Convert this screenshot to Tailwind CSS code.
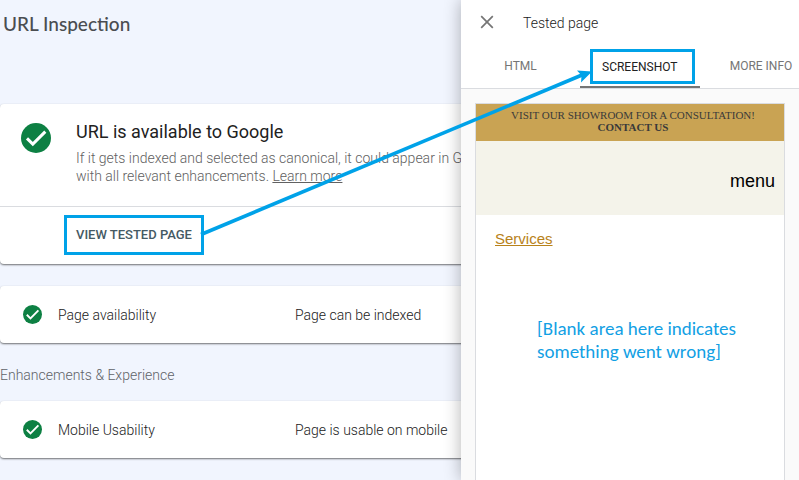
<!DOCTYPE html>
<html lang="en">
<head>
<meta charset="utf-8">
<meta name="viewport" content="width=device-width, initial-scale=1">
<title>URL Inspection</title>
<script src="https://cdn.jsdelivr.net/npm/@tailwindcss/browser@4"></script>
</head>
<body class="relative h-screen overflow-hidden bg-[#f1f5fe] font-['Roboto',sans-serif] text-sm text-[#212121]">

<svg class="hidden" aria-hidden="true">
  <symbol id="check" viewBox="0 0 30 30">
    <circle cx="15" cy="15" r="15" fill="#0d8043"/>
    <path d="M6 15.4l5.8 5.7L24.3 8.6" fill="none" stroke="#fff" stroke-width="3"/>
  </symbol>
</svg>

<main>
  <h1 class="px-[3px] pt-3 text-[19px] leading-6 font-medium font-['Lato',sans-serif] text-[#4a4d51]">URL Inspection</h1>

  <section class="mt-17 rounded-sm bg-white shadow-[0_1px_2px_rgba(0,0,0,0.55)]">
    <div class="flex gap-[25px] pt-4 pb-[21px] pl-[21px]">
      <svg class="mt-[3px] size-[30px] shrink-0" role="img" aria-label="Valid"><use href="#check"/></svg>
      <div>
        <h2 class="text-lg leading-6 font-normal">URL is available to Google</h2>
        <p class="mt-[5px] leading-[18px] font-light whitespace-nowrap text-[#616161]">If it gets indexed and selected as canonical, it could appear in Google<br>with all relevant enhancements. <a href="#" class="underline">Learn more</a></p>
      </div>
    </div>
    <div class="border-t border-[#dadce0] pt-2 pb-[9px] pl-16">
      <button type="button" class="block h-10 w-35 border-3 border-[#00a2e8] pl-[9px] text-left text-[13px] font-medium whitespace-nowrap text-[#455a64]">VIEW TESTED PAGE</button>
    </div>
  </section>

  <section class="mt-[22px] flex h-[57px] items-center rounded-sm bg-white pl-[23px] shadow-[0_1px_2px_rgba(0,0,0,0.55)]">
    <svg class="size-[19px]" role="img" aria-label="Valid"><use href="#check"/></svg>
    <h3 class="ml-4 w-[237px] font-light">Page availability</h3>
    <p class="font-light">Page can be indexed</p>
  </section>

  <h2 class="pt-[22px] pb-4 leading-5 font-light text-[#5f6368]">Enhancements &amp; Experience</h2>

  <section class="flex h-[57px] items-center rounded-sm bg-white pl-[23px] shadow-[0_1px_2px_rgba(0,0,0,0.55)]">
    <svg class="size-[19px]" role="img" aria-label="Valid"><use href="#check"/></svg>
    <h3 class="ml-4 w-[237px] font-light">Mobile Usability</h3>
    <p class="font-light">Page is usable on mobile</p>
  </section>
</main>

<!-- Drawer that slides over the page -->
<aside class="absolute inset-y-0 right-0 flex w-[338px] flex-col overflow-hidden bg-[#fafafa] shadow-[0_0_16px_rgba(0,0,0,0.3)]" aria-label="Tested page">
  <header class="flex h-[46px] items-center gap-7 bg-white pl-[18px]">
    <button type="button" aria-label="Close"><svg class="size-4" viewBox="0 0 16 16" fill="none" stroke="#757575" stroke-width="1.7"><path d="M2.2 1.2l11.6 11.6M13.8 1.2L2.2 12.8"/></svg></button>
    <h2 class="font-light">Tested page</h2>
  </header>
  <nav class="flex h-[43px] border-b border-[#dadce0] bg-white text-xs text-[#757575]">
    <button type="button" class="w-[119px] shrink-0 pb-[2px]">HTML</button>
    <button type="button" class="flex w-30 shrink-0 border-b-2 border-[#757575] pt-[3px] pl-[10px] text-[#212121]"><span class="flex h-[35px] w-[105px] items-center border-3 border-[#00a2e8] pl-[9px]">SCREENSHOT</span></button>
    <button type="button" class="w-[122px] shrink-0 pb-[2px]">MORE INFO</button>
  </nav>
  <article class="mx-[14px] mt-[14px] flex-1 border-x border-t border-[#dadce0] bg-white">
    <p class="bg-[#c9a353] pt-[5px] pb-[8px] pl-[6px] text-center font-['Liberation_Serif',serif] text-[11px] leading-3 text-[#3a3a3a]">VISIT OUR SHOWROOM FOR A CONSULTATION!<br><b>CONTACT US</b></p>
    <div class="flex h-[74px] items-center justify-end bg-[#f4f3ea] pt-[6px] pr-[9px] font-['Liberation_Sans',sans-serif] text-lg text-black">menu</div>
    <a href="#" class="mt-4 ml-[19px] block w-fit font-['Liberation_Sans',sans-serif] text-[15px] leading-4 text-[#b8821a] underline">Services</a>
    <p class="mt-[70px] ml-[61px] font-['Carlito','Lato',sans-serif] text-[19px] leading-[23px] whitespace-nowrap text-[#12a0e4]">[Blank area here indicates<br>something went wrong]</p>
  </article>
</aside>

<!-- Arrow between the two highlighted controls -->
<svg class="pointer-events-none absolute top-0 right-0 h-[480px] w-[799px]" viewBox="0 0 799 480" aria-hidden="true">
  <path d="M201 234.500L582 75" stroke="#00a2e8" stroke-width="3.6"/>
  <path d="M592 71.500L577 70.500L581.500 75.500L581 82.500z" fill="#00a2e8"/>
</svg>
</body>
</html>
